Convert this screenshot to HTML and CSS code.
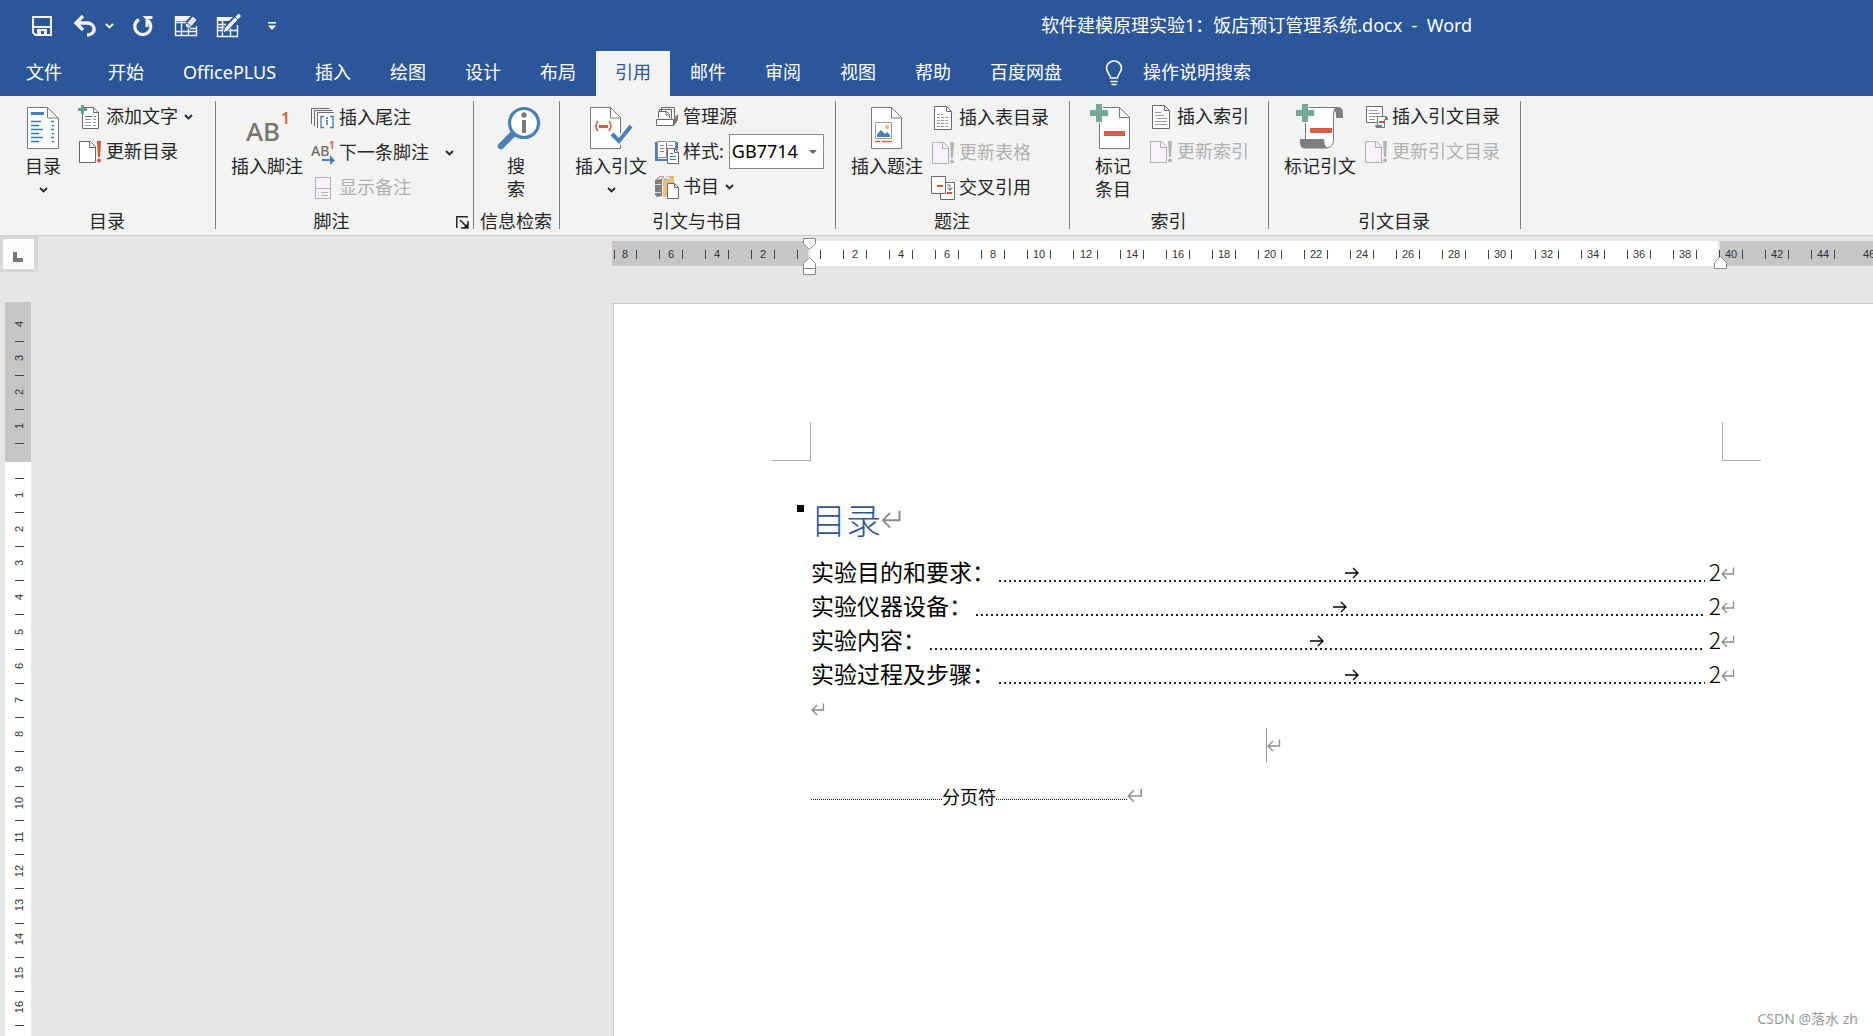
FILE: index.html
```html
<!DOCTYPE html>
<html lang="zh-CN">
<head>
<meta charset="utf-8">
<title>软件建模原理实验1：饭店预订管理系统.docx - Word</title>
<link rel="stylesheet" href="styles.css">
</head>
<body>
<svg class="defs" aria-hidden="true">
  <symbol id="chev" viewBox="0 0 9 6"><path d="M1 1l3.500 3.500L8 1" fill="none" stroke="currentColor" stroke-width="1.800"/></symbol>
  <symbol id="ret" viewBox="0 0 14 13"><path d="M12.500 0.500v6.500H1.500M6 2L1.200 7l4.800 5" fill="none" stroke="#8c8c8c" stroke-width="1.300"/></symbol>
  <symbol id="arrow" viewBox="0 0 14 12"><path d="M0 6h13M8 1l5 5-5 5" fill="none" stroke="#000" stroke-width="1.300"/></symbol>
  <symbol id="update" viewBox="0 0 24 24"><path d="M1.500 1.500h11l5 5v16h-16zM11.500 1.500v6h6" fill="#fff" stroke="#6a6a6a"/><path d="M19 1h4l-1 16h-2z" fill="#d65532"/><circle cx="21" cy="20.500" r="2" fill="#d65532"/></symbol>
  <symbol id="update-off" viewBox="0 0 24 24"><path d="M1.500 1.500h11l5 5v16h-16zM11.500 1.500v6h6" fill="#f8f3fa" stroke="#b4afb6"/><path d="M19 1h4l-1 16h-2z" fill="#b4b4b4"/><circle cx="21" cy="20.500" r="2" fill="#b4b4b4"/></symbol>
</svg>

<header class="titlebar">
  <div class="quick">
    <button class="q" aria-label="保存"><svg width="22" height="24"><path d="M2 3h18v18H4.500L2 18.500z" fill="none" stroke="#f3f3f3" stroke-width="2"/><path d="M3 12h16v2H3zM6 15h10v6h-3v-4h-3v4H6z" fill="#f3f3f3"/></svg></button>
    <button class="q undo" aria-label="撤消"><svg width="24" height="24"><path d="M10 2L3 9l7 7M4 9h10c9 0 10 12 0 12" fill="none" stroke="#f3f3f3" stroke-width="3.400"/></svg></button>
    <button class="q qmore" aria-label="撤消列表"><svg width="9" height="6"><use href="#chev"/></svg></button>
    <button class="q redo" aria-label="重复"><svg width="22" height="24"><path d="M7 5.500a8 8 0 1 0 9 1" fill="none" stroke="#f3f3f3" stroke-width="3.200"/><path d="M10.500 2h10v3h-4v8h-3V5z" fill="#f3f3f3"/></svg></button>
    <button class="q" aria-label="擦除表格"><svg width="24" height="24"><path d="M1.500 3v18.500h21V12M1 8.500h11M7.500 6v15M14.500 14v7M1 17.500h21M16 14.500h6" fill="none" stroke="#f3f3f3" stroke-width="1.400"/><path d="M1 2h16l-5 5H1z" fill="#f3f3f3"/><path d="M19 2l4 4-7 8h-3l-2-3z" fill="#e8e4e4" stroke="#2b579a" stroke-width=".8"/><path d="M13 8.500l4 4" stroke="#2b579a"/></svg></button>
    <button class="q draw" aria-label="绘制表格"><svg width="26" height="26"><path d="M1.500 4v19.500h20V12M1 11.500h9M1 17.500h20M6.500 8v15M14.500 15v8M1 14.500h8" fill="none" stroke="#f3f3f3" stroke-width="1.400"/><path d="M1 4h16l-4 4H1z" fill="#f3f3f3"/><path d="M22.500 0l3 3-14 15-4.500 2 1.500-5z" fill="#f3f3f3" stroke="#2b579a"/><path d="M19 4l3 3" stroke="#2b579a"/></svg></button>
    <button class="q custom" aria-label="自定义快速访问工具栏"><svg width="8" height="8"><path d="M0 0h8v1.500H0zM0 3.500h8L4 8z" fill="#fff"/></svg></button>
  </div>
  <div class="doc-title">软件建模原理实验1：饭店预订管理系统.docx&nbsp; -&nbsp; Word</div>
</header>

<nav class="tabs">
  <button class="tab file">文件</button>
  <button class="tab">开始</button>
  <button class="tab">OfficePLUS</button>
  <button class="tab">插入</button>
  <button class="tab">绘图</button>
  <button class="tab">设计</button>
  <button class="tab">布局</button>
  <button class="tab active">引用</button>
  <button class="tab">邮件</button>
  <button class="tab">审阅</button>
  <button class="tab">视图</button>
  <button class="tab">帮助</button>
  <button class="tab">百度网盘</button>
  <button class="tab tell"><svg width="18" height="26"><path d="M5.500 18c0-4-4-5-4-10a7.500 7 0 0 1 15 0c0 5-4 6-4 10zM5.500 21.500h7M6.500 24.500h5" fill="none" stroke="#fff" stroke-width="1.600"/></svg>操作说明搜索</button>
</nav>

<main class="ribbon">
  <section class="group g-toc">
    <div class="body">
      <button class="big"><svg width="32" height="42"><path d="M.5.500h20l11 11v30H.5z" fill="#fff" stroke="#7a7a7a"/><path d="M20.500.5v10.500h11" fill="none" stroke="#7a7a7a"/><path d="M4 5h13v3H4z" fill="#4a7fb8"/><path d="M4 14.500h10M4 18.500h8M4 22.500h12M4 26.500h8M4 30.500h12M4 34.500h8M24 14.500h3M25 18.500h2M24 22.500h3M25 26.500h2M24 30.500h3M25 34.500h2" stroke="#3f77b4" stroke-width="1.300"/></svg><span>目录</span><svg class="drop" width="9" height="6"><use href="#chev"/></svg></button>
      <div class="stack">
        <button class="small"><svg width="24" height="24"><path d="M4.500 2.500h11l5 5v16h-16z" fill="#fff" stroke="#6a6a6a"/><path d="M15.500 2.500v5h5" fill="none" stroke="#6a6a6a"/><path d="M7 11.500h7M16 11.500h2" stroke="#3f77b4"/><path d="M7 14.500h6M15 14.500h3M7 17.500h6M15 17.500h3M7 20.500h6M15 20.500h3" stroke="#999"/><path d="M3 0h3v3h3v3H6v3H3V6H0V3h3z" fill="#67a08b"/></svg><span>添加文字</span><svg class="more" width="9" height="6"><use href="#chev"/></svg></button>
        <button class="small"><svg width="24" height="24"><use href="#update"/></svg><span>更新目录</span></button>
      </div>
    </div>
    <h2>目录</h2>
  </section>

  <section class="group g-notes">
    <div class="body">
      <button class="big"><svg width="48" height="42"><text x="3" y="34" class="ab">AB</text><text x="38" y="17" class="one">1</text></svg><span>插入脚注</span></button>
      <div class="stack">
        <button class="small"><svg width="24" height="24"><path d="M.5 18V2.500h18M3.500 20V4.500h18M6.500 22V6.500h16" fill="none" stroke="#6a6a6a"/><path d="M7 7h16v15H7z" fill="#fff"/><path d="M13 10.500h-3v11h3M19 10.500h3v11h-3" fill="none" stroke="#3f77b4" stroke-width="1.300"/><path d="M16 11v2M16 14v5" stroke="#3f77b4" stroke-width="1.500"/></svg><span>插入尾注</span></button>
        <button class="small"><svg width="24" height="24"><text x="0" y="15" class="ab-s">AB</text><text x="18" y="8" class="one-s">1</text><path d="M11 18h8v-4l5 5.500-5 4.500v-4h-8z" fill="#4a7fb8"/></svg><span>下一条脚注</span><svg class="more far" width="9" height="6"><use href="#chev"/></svg></button>
        <button class="small" disabled><svg width="24" height="24"><path d="M4.500 1.500h15v21h-15zM4.500 12.500h15M7 16.500h1M10 16.500h7M7 19.500h1M10 19.500h7" fill="#f8f3fa" stroke="#b4afb6"/></svg><span>显示备注</span></button>
      </div>
    </div>
    <h2>脚注</h2>
    <button class="launcher" aria-label="脚注和尾注"><svg width="13" height="13"><path d="M.8 12V.8H12M4 4l6 6M12 5v7H5" fill="none" stroke="#262626" stroke-width="1.500"/><path d="M12 7v5H7z" fill="#262626"/></svg></button>
  </section>

  <section class="group g-search">
    <div class="body">
      <button class="big"><svg width="42" height="42"><path d="M16 26L3 39" stroke="#4a7fb8" stroke-width="6.500" stroke-linecap="round"/><circle cx="26" cy="16" r="14.500" fill="#fff" stroke="#4a7fb8" stroke-width="3.200"/><circle cx="26" cy="8" r="2.700" fill="#7a7a7a"/><path d="M24 13h4v13h-4z" fill="#7a7a7a"/></svg><span>搜<br>索</span></button>
    </div>
    <h2>信息检索</h2>
  </section>

  <section class="group g-cite">
    <div class="body">
      <button class="big"><svg width="42" height="42"><path d="M.5.500h20l10 10v31H.5z" fill="#fff" stroke="#7a7a7a"/><path d="M20.500.5v10.500h10" fill="none" stroke="#7a7a7a"/><path d="M8 14q-4 5 0 10M19 14q4 5 0 10" fill="none" stroke="#d65f43" stroke-width="1.600"/><path d="M9 18h9v3H9z" fill="#d65f43"/><path d="M22 27l7 7 12-15" fill="none" stroke="#f8f8f8" stroke-width="7"/><path d="M22 27l7 7 12-15" fill="none" stroke="#4a7fb8" stroke-width="4"/></svg><span>插入引文</span><svg class="drop" width="9" height="6"><use href="#chev"/></svg></button>
      <div class="stack">
        <button class="small"><svg width="24" height="24"><path d="M6.500 6V2.500h13v10M4.500 8V4.500h12v10" fill="none" stroke="#6a6a6a"/><path d="M3.500 13V6.500h8l3 3V13" fill="#fff" stroke="#6a6a6a"/><path d="M11 6v4h4" fill="none" stroke="#6a6a6a"/><path d="M1.500 14.500h17v6h-17z" fill="#fff" stroke="#6a6a6a"/><path d="M19 13l4-4v6l-4 6z" fill="#7a7a7a"/></svg><span>管理源</span></button>
        <div class="small"><svg width="24" height="24"><path d="M0 2h3v17h9v2H0zM20 2h3v8h-3z" fill="#4a7fb8"/><path d="M2.500 1.500h8l1 1 1-1h8v16h-18z" fill="#fff" stroke="#8a8a8a"/><path d="M11.500 2v16M5 5.500h4M5 8.500h4M5 11.500h4M14 5.500h4" stroke="#8a8a8a"/><path d="M12.500 8.500h7l4 4v11h-11z" fill="#fff" stroke="#6a6a6a"/><path d="M19.500 8.500v4h4" fill="none" stroke="#6a6a6a"/><path d="M15 13.500h3M15 16.500h6M15 19.500h6" stroke="#3f77b4"/></svg><label for="style">样式:</label><span class="combo"><select id="style"><option>GB7714</option></select></span></div>
        <button class="small"><svg width="24" height="24"><path d="M0 5l5-4h4L7 5v16l-5 1-2-2z" fill="#808080"/><path d="M8 5l5-4h6v17l-6 3-5 1z" fill="#e9c07a"/><path d="M1.500 4.500l4-3h3l-2.500 3zM9.500 4.500l4-3h3l-3 3z" fill="#fff" stroke="#999" stroke-width=".6"/><path d="M0 9.500h6M0 17.500h6" stroke="#ddd"/><path d="M12.500 8.500h7l4 4v11h-11z" fill="#fff" stroke="#6a6a6a"/><path d="M19.500 8.500v4h4" fill="none" stroke="#6a6a6a"/></svg><span>书目</span><svg class="more" width="9" height="6"><use href="#chev"/></svg></button>
      </div>
    </div>
    <h2>引文与书目</h2>
  </section>

  <section class="group g-caption">
    <div class="body">
      <button class="big"><svg width="32" height="42"><path d="M.5.500h20l10 10v31H.5z" fill="#fff" stroke="#7a7a7a"/><path d="M20.500.5v10.500h10" fill="none" stroke="#7a7a7a"/><path d="M4.500 15.500h16v16h-16z" fill="#fff" stroke="#9a9a9a"/><path d="M6 30v-3l4-4 4 4 2-2 3 3v2z" fill="#4a7fb8"/><circle cx="16" cy="20" r="2.200" fill="#e9c07a"/><path d="M4 34.500h5M11 34.500h10" stroke="#d65f43" stroke-width="1.300"/></svg><span>插入题注</span></button>
      <div class="stack">
        <button class="small"><svg width="24" height="24"><path d="M3.500.5h12l5 5v18h-17z" fill="#fff" stroke="#6a6a6a"/><path d="M15.500.5v5h5" fill="none" stroke="#6a6a6a"/><path d="M6 8.500h6M6 11.500h12M6 14.500h12M6 17.500h12M6 20.500h12" stroke="#999" stroke-dasharray="3 1"/></svg><span>插入表目录</span></button>
        <button class="small" disabled><svg width="24" height="24"><use href="#update-off"/></svg><span>更新表格</span></button>
        <button class="small"><svg width="24" height="24"><path d="M9.500 6.500h14v17h-14z" fill="#fff" stroke="#6a6a6a"/><path d="M.5.500h14v17H.5z" fill="#fff" stroke="#6a6a6a"/><path d="M6 10h6M16 17h5" stroke="#d65532" stroke-width="2"/><path d="M16 9h3v5M16.500 11.500l2.500 3 2.500-3" fill="none" stroke="#6a6a6a"/></svg><span>交叉引用</span></button>
      </div>
    </div>
    <h2>题注</h2>
  </section>

  <section class="group g-index">
    <div class="body">
      <button class="big"><svg width="46" height="46"><path d="M12.500 4.500h20l10 10v31h-30z" fill="#fff" stroke="#7a7a7a"/><path d="M32.500 4.500v10h10" fill="none" stroke="#7a7a7a"/><path d="M17 28h21v5H17z" fill="#d65f43"/><path d="M8 0h8v6h6v8h-6v6H8v-6H2V6h6z" fill="#f3f3f3"/><path d="M9 1h6v6h6v6h-6v6H9v-6H3V7h6z" fill="#76a797"/></svg><span>标记<br>条目</span></button>
      <div class="stack">
        <button class="small"><svg width="24" height="24"><path d="M3.500.5h12l5 5v18h-17z" fill="#fff" stroke="#6a6a6a"/><path d="M15.500.5v5h5" fill="none" stroke="#6a6a6a"/><path d="M6 7.500h6M6 10.500h9M8 13.500h10M6 16.500h12M6 19.500h12" stroke="#999"/></svg><span>插入索引</span></button>
        <button class="small" disabled><svg width="24" height="24"><use href="#update-off"/></svg><span>更新索引</span></button>
      </div>
    </div>
    <h2>索引</h2>
  </section>

  <section class="group g-auth">
    <div class="body">
      <button class="big"><svg width="48" height="46"><path d="M36 4h6q5 0 5 6v5h-7V10z" fill="#7f7f7f"/><path d="M9.500 4.500h31q-3 1-3 8v24q0 8-7 8-18-2-21-8z" fill="#fff" stroke="#7a7a7a"/><path d="M4 36h24q0 7 4 9.500H8q-5-1-4-9.500z" fill="#7f7f7f"/><path d="M14 25h22v5H14z" fill="#d65f43"/><path d="M5 0h8v6h6v8h-6v6H5v-6H0V6h5z" fill="#f3f3f3"/><path d="M6 1h6v6h6v6h-6v6H6v-6H0V7h6z" fill="#76a797"/></svg><span>标记引文</span></button>
      <div class="stack">
        <button class="small"><svg width="24" height="24"><path d="M2.500 1.500h16v16h-16z" fill="#fff" stroke="#6a6a6a"/><path d="M5 5.500h8M5 8.500h11M5 11.500h8M5 14.500h6" stroke="#999"/><path d="M13.500 11.500h9v3h-2v8h-8v-2h1z" fill="#fff" stroke="#777"/><path d="M11 20h7v3h-6zM21 12h3v3h-3z" fill="#7f7f7f"/><path d="M15 17h5" stroke="#d65532" stroke-width="2"/></svg><span>插入引文目录</span></button>
        <button class="small" disabled><svg width="24" height="24"><use href="#update-off"/></svg><span>更新引文目录</span></button>
      </div>
    </div>
    <h2>引文目录</h2>
  </section>
</main>

<div class="workspace">
  <div class="ruler-row">
    <button class="tabstop" aria-label="左对齐式制表符"><svg width="10" height="10"><path d="M0 0h4v6h6v4H0z" fill="#777"/></svg></button>
    <svg class="hruler" height="40">
      <path d="M0 5h1261v25H0z" fill="#c6c6c6"/><path d="M196 5h912v25H196z" fill="#e6e6e6"/><path d="M198 5h908v25H198z" fill="#fff"/>
      <path d="M2.500 14v9m22-9v9m23-9v9m23-9v9m23-9v9m23-9v9m23-9v9m23-9v9m23-9v9m23-9v9m23-9v9m23-9v9m23-9v9m23-9v9m23-9v9m23-9v9m23-9v9m23-9v9m23-9v9m23-9v9m23-9v9m24-9v9m23-9v9m23-9v9m23-9v9m23-9v9m23-9v9m23-9v9m23-9v9m23-9v9m23-9v9m23-9v9m23-9v9m23-9v9m23-9v9m23-9v9m23-9v9m23-9v9m23-9v9m23-9v9m24-9v9m23-9v9m23-9v9m23-9v9m23-9v9m23-9v9m23-9v9m23-9v9m23-9v9m23-9v9m23-9v9m23-9v9m23-9v9m23-9v9" stroke="#444" fill="none"/>
      <g class="num">
        <text x="13" y="22">8</text><text x="59" y="22">6</text><text x="105" y="22">4</text><text x="151" y="22">2</text>
        <text x="243" y="22">2</text><text x="289" y="22">4</text><text x="335" y="22">6</text><text x="381" y="22">8</text><text x="427" y="22">10</text><text x="474" y="22">12</text><text x="520" y="22">14</text><text x="566" y="22">16</text><text x="612" y="22">18</text><text x="658" y="22">20</text><text x="704" y="22">22</text><text x="750" y="22">24</text><text x="796" y="22">26</text><text x="842" y="22">28</text><text x="888" y="22">30</text><text x="935" y="22">32</text><text x="981" y="22">34</text><text x="1027" y="22">36</text><text x="1073" y="22">38</text><text x="1119" y="22">40</text><text x="1165" y="22">42</text><text x="1211" y="22">44</text><text x="1257" y="22">46</text>
      </g>
      <path d="M191.500 2.500h12v5l-6 6-6-6zM191.500 38.500v-11l6-6 6 6v11zM191.500 32.500h12M1102.500 32.500v-6l6-6 6 6v6z" fill="#fff" stroke="#888"/>
    </svg>
  </div>
  <div class="canvas">
    <div class="vside"><svg class="vruler" width="26" height="734">
      <path d="M0 0h26v160H0z" fill="#c6c6c6"/>
      <path d="M10 39.500h9m-9 34h9m-9 34h9m-9 34h9m-9 35h9m-9 34h9m-9 34h9m-9 34h9m-9 34h9m-9 35h9m-9 34h9m-9 34h9m-9 34h9m-9 35h9m-9 34h9m-9 34h9m-9 34h9m-9 35h9m-9 34h9m-9 34h9m-9 34h9" stroke="#444" fill="none"/>
      <g class="num">
        <text transform="translate(18 22) rotate(-90)">4</text><text transform="translate(18 56) rotate(-90)">3</text><text transform="translate(18 90) rotate(-90)">2</text><text transform="translate(18 124) rotate(-90)">1</text>
        <text transform="translate(18 193) rotate(-90)">1</text><text transform="translate(18 227) rotate(-90)">2</text><text transform="translate(18 261) rotate(-90)">3</text><text transform="translate(18 295) rotate(-90)">4</text><text transform="translate(18 330) rotate(-90)">5</text><text transform="translate(18 364) rotate(-90)">6</text><text transform="translate(18 398) rotate(-90)">7</text><text transform="translate(18 432) rotate(-90)">8</text><text transform="translate(18 467) rotate(-90)">9</text><text transform="translate(18 501) rotate(-90)">10</text><text transform="translate(18 535) rotate(-90)">11</text><text transform="translate(18 569) rotate(-90)">12</text><text transform="translate(18 603) rotate(-90)">13</text><text transform="translate(18 637) rotate(-90)">14</text><text transform="translate(18 671) rotate(-90)">15</text><text transform="translate(18 705) rotate(-90)">16</text>
      </g>
    </svg></div>
    <article class="page">
      <span class="crop crop-l"></span><span class="crop crop-r"></span>
      <span class="bullet"></span>
      <h1>目录<svg width="21" height="19"><use href="#ret"/></svg></h1>
      <ul class="toc">
        <li><span>实验目的和要求：</span><span class="leader"><svg width="14" height="12"><use href="#arrow"/></svg></span><a href="#p2">2</a><svg class="mark" width="14" height="13"><use href="#ret"/></svg></li>
        <li><span>实验仪器设备：</span><span class="leader"><svg width="14" height="12"><use href="#arrow"/></svg></span><a href="#p2">2</a><svg class="mark" width="14" height="13"><use href="#ret"/></svg></li>
        <li><span>实验内容：</span><span class="leader"><svg width="14" height="12"><use href="#arrow"/></svg></span><a href="#p2">2</a><svg class="mark" width="14" height="13"><use href="#ret"/></svg></li>
        <li><span>实验过程及步骤：</span><span class="leader"><svg width="14" height="12"><use href="#arrow"/></svg></span><a href="#p2">2</a><svg class="mark" width="14" height="13"><use href="#ret"/></svg></li>
      </ul>
      <p class="line"><svg width="14" height="13"><use href="#ret"/></svg></p>
      <p class="line center"><span class="caret"></span><svg width="14" height="13"><use href="#ret"/></svg></p>
      <p class="line break"><span class="dots"></span><span class="label">分页符</span><span class="dots"></span><svg width="16" height="15"><use href="#ret"/></svg></p>
    </article>
  </div>
</div>
<div class="watermark">CSDN @落水 zh</div>
</body>
</html>
```
FILE: styles.css
```css
* { box-sizing: border-box; }

body {
  margin: 0;
  height: 100vh;
  overflow: hidden;
  display: flex;
  flex-direction: column;
  background: #e6e6e6;
  color: #262626;
  font: 18px/23px "Noto Sans", "Noto Sans CJK SC", sans-serif;
}

.defs { position: absolute; width: 0; height: 0; }

svg { display: block; flex: none; overflow: visible; }

button {
  margin: 0;
  padding: 0;
  border: 0;
  background: none;
  color: inherit;
  font: inherit;
  white-space: nowrap;
}

/* Title bar */
.titlebar {
  flex: none;
  display: grid;
  grid-template-columns: 1041px 1fr;
  align-items: center;
  height: 51px;
  background: #2b579a;
  color: #fff;
}
.quick { display: flex; align-items: center; padding-left: 31px; }
.undo { margin-left: 20px; }
.qmore { margin-left: 8px; }
.redo { margin-left: 18px; }
.redo + .q { margin-left: 20px; }
.draw { margin-left: 18px; }
.custom { margin-left: 26px; }
.doc-title { white-space: nowrap; }

/* Tabs */
.tabs {
  flex: none;
  display: flex;
  gap: 1px;
  height: 45px;
  padding-left: 7px;
  background: #2b579a;
  color: #fff;
}
.tab { padding: 0 19px 2px; }
.tab.file { margin-right: 7px; }
.tab.active { background: #f3f3f3; color: #2b579a; }
.tab.tell { display: flex; align-items: center; gap: 20px; padding-left: 23px; }

/* Ribbon */
.ribbon {
  flex: none;
  display: flex;
  height: 140px;
  background: #f3f3f3;
  border-bottom: 1px solid #d0d0d0;
}
.group { position: relative; padding-top: 5px; }
.group::after {
  content: "";
  position: absolute;
  top: 5px;
  right: 0;
  bottom: 6px;
  width: 1px;
  background: #808080;
}
.g-toc { width: 216px; }
.g-notes { width: 258px; }
.g-search { width: 86px; }
.g-cite { width: 276px; }
.g-caption { width: 234px; }
.g-index { width: 199px; }
.g-auth { width: 252px; }

.body { display: flex; align-items: flex-start; gap: 8px; height: 105px; padding-left: 15px; }
.g-toc .body { padding-left: 8px; gap: 0; }
.g-index .body { padding-left: 7px; gap: 0; }
.g-search .body { padding-left: 9px; }

.big {
  display: flex;
  flex-direction: column;
  align-items: center;
  width: 72px;
  padding-top: 6px;
}
.g-toc .big { width: 70px; }
.big span { margin-top: 6px; }
.g-search .big span { margin-right: 6px; }
.g-index .big, .g-auth .big { padding-top: 2px; }
.g-index .big > svg { margin-right: 7px; }
.big .drop { margin-top: 9px; }

.stack { margin-top: -2px; }
.g-notes .stack, .g-caption .stack { margin-top: -1px; }
.small { display: flex; align-items: center; gap: 4px; height: 35px; white-space: nowrap; }
.small .more { margin-left: 2px; }
.small .far { margin-left: 12px; }
.small:disabled { color: #b1b1b1; }

.combo { position: relative; margin-left: 1px; }
.combo::after {
  content: "";
  position: absolute;
  right: 7px;
  top: 16px;
  border: 4px solid transparent;
  border-top-color: #666;
  border-bottom: 0;
}
select {
  display: block;
  appearance: none;
  width: 95px;
  height: 35px;
  padding: 0 0 0 2px;
  border: 1px solid #8a8a8a;
  border-radius: 0;
  background: #fff;
  color: #000;
  font: inherit;
}

h2 {
  margin: 3px 0 0;
  padding-right: 2px;
  font-size: 18px;
  font-weight: 400;
  line-height: 24px;
  text-align: center;
  white-space: nowrap;
}
.g-notes h2 { padding-right: 27px; }
.launcher { position: absolute; right: 5px; bottom: 6px; }

.ab { font: 500 26px "Noto Sans", sans-serif; fill: #757575; }
.one { font: 600 16px "Noto Sans", sans-serif; fill: #d65f43; }
.ab-s { font: 500 14px "Noto Sans", sans-serif; fill: #6a6a6a; }
.one-s { font: 600 10px "Noto Sans", sans-serif; fill: #d65532; }

/* Rulers */
.workspace { flex: 1; display: flex; flex-direction: column; min-height: 0; }
.ruler-row { flex: none; display: flex; gap: 574px; height: 66px; }
.tabstop {
  flex: none;
  display: flex;
  align-items: flex-end;
  width: 38px;
  height: 36px;
  padding: 0 0 7px 10px;
  border: 3px solid #d8d8d8;
  border-right-width: 4px;
  background: #fcfcfc;
}
.hruler { flex: 1; min-width: 0; overflow: hidden; }
.num { font: 11px "Liberation Sans", sans-serif; fill: #333; text-anchor: middle; }

.canvas { flex: 1; display: flex; gap: 582px; min-height: 0; padding-left: 5px; }
.vside { flex: none; width: 26px; background: #fff; overflow: hidden; }

/* Document page */
.page {
  position: relative;
  flex: 1;
  min-width: 0;
  margin-top: 1px;
  padding: 189px 151px 0 197px;
  border: 1px solid #c6c6c6;
  border-width: 1px 0 0 1px;
  background: #fff;
  color: #000;
  font-family: "Noto Sans CJK SC", sans-serif;
  font-weight: 300;
}
.crop { position: absolute; top: 118px; width: 39px; height: 39px; border-bottom: 1px solid #ababab; }
.crop-l { left: 158px; border-right: 1px solid #ababab; }
.crop-r { right: 112px; border-left: 1px solid #ababab; }
.bullet { position: absolute; left: 183px; top: 201px; width: 7px; height: 7px; background: #000; }

h1 {
  display: flex;
  align-items: center;
  margin: 0 0 11px;
  font-size: 35px;
  font-weight: 300;
  line-height: 52px;
  color: #2f5496;
}
.toc { margin: 0; padding: 0; list-style: none; font-size: 23px; line-height: 30px; }
.toc li { display: flex; align-items: center; height: 34px; margin-right: -13px; }
.toc span, .toc a { padding-bottom: 4px; }
.toc span { font-weight: 400; }
.toc a { color: inherit; text-decoration: none; }
.toc .leader {
  flex: 1;
  display: flex;
  align-items: center;
  justify-content: center;
  height: 34px;
  margin: 0 4px 0 4px;
  padding: 0;
  background: repeating-linear-gradient(90deg, #222 0 2px, transparent 2px 5px) 0 24px / 100% 2px no-repeat;
}
.line { display: flex; align-items: center; height: 34px; margin: 0; }
.line.center { justify-content: center; margin-top: 2px; }
.center svg { margin-right: -14px; }
.caret { width: 1px; height: 34px; background: #999; }
.break { margin-top: 18px; }
.break .label { padding-bottom: 2px; font-weight: 400; }
.dots {
  width: 131px;
  height: 1px;
  margin-top: 5px;
  background: repeating-linear-gradient(90deg, #222 0 1px, transparent 1px 2px);
}
.break svg { margin-bottom: 4px; }

.watermark {
  position: absolute;
  right: 15px;
  bottom: 6px;
  color: #999;
  font-size: 14px;
  line-height: 22px;
}
```
